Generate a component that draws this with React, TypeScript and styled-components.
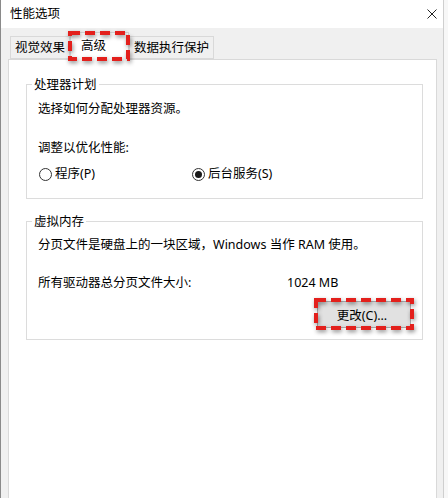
import React from "react";
import styled, { createGlobalStyle } from "styled-components";

const GlobalStyle = createGlobalStyle`
    html, body {
        margin: 0;
        padding: 0;
        background: #f7f7f7;
        overflow: hidden;
    }
    body {
        font-family: "Noto Sans", "Noto Sans CJK SC", sans-serif;
        font-size: 12.5px;
        color: #000;
    }
`

const Window = styled.div`
    width: 442px;
    height: 520px;
    display: flex;
    flex-direction: column;
    border-left: 1px solid #8a8a8a;
    border-right: 1px solid #cfcfcf;
    background: #f0f0f0;
`
const TitleBar = styled.div`
    height: 28px;
    display: flex;
    align-items: center;
    justify-content: space-between;
    padding: 0 6px 0 9px;
    background: #fff;
    line-height: 16px;
`
const Body = styled.div`
    flex: 1;
    display: flex;
    flex-direction: column;
    padding: 4px 6px 0 7px;
`
const TabRow = styled.div`
    display: flex;
    align-items: flex-end;
    padding-left: 2px;
    position: relative;
    z-index: 1;
`
const Tab = styled.div<{ $active?: boolean }>`
    position: relative;
    box-sizing: border-box;
    height: ${p => (p.$active ? "28px" : "23px")};
    margin-bottom: ${p => (p.$active ? "-1px" : "0")};
    padding: ${p => (p.$active ? "0 22px 2px 10px" : "0 4px")};
    display: flex;
    align-items: center;
    background: ${p => (p.$active ? "#fff" : "#f0f0f0")};
    border: 1px solid #d9d9d9;
    border-bottom: ${p => (p.$active ? "none" : "1px solid #d9d9d9")};
    border-left: ${p => (p.$active ? "1px solid #d9d9d9" : "1px solid #d9d9d9")};
    line-height: 16px;
    white-space: nowrap;
    & + & {
        border-left: ${p => (p.$active ? "1px solid #d9d9d9" : "none")};
    }
`
const Annotation = styled.svg<{ $x: number; $y: number }>`
    position: absolute;
    left: ${p => p.$x}px;
    top: ${p => p.$y}px;
    overflow: visible;
    pointer-events: none;
    filter: drop-shadow(1px 2px 2px rgba(0, 0, 0, 0.45));
    z-index: 2;
`
const Panel = styled.div`
    flex: 1;
    display: flex;
    flex-direction: column;
    gap: 15px;
    background: #fff;
    border: 1px solid #d9d9d9;
    padding: 17px 13px 0 17px;
`
const Group = styled.fieldset`
    margin: 0;
    min-width: 0;
    border: 1px solid #dcdcdc;
    padding: 0 11px;
    display: flex;
    flex-direction: column;
`
const Legend = styled.legend`
    margin-left: -6px;
    padding: 0 2px;
    line-height: 15px;
`
const Line = styled.div<{ $gap?: number }>`
    line-height: 16px;
    margin-top: ${p => p.$gap ?? 0}px;
    white-space: nowrap;
`
const Columns = styled.div<{ $first: number; $gap?: number }>`
    display: grid;
    grid-template-columns: ${p => p.$first}px auto;
    line-height: 16px;
    margin-top: ${p => p.$gap ?? 0}px;
`
const RadioLabel = styled.label`
    display: flex;
    align-items: center;
    gap: 3px;
`
const RadioDot = styled.span<{ $checked?: boolean }>`
    box-sizing: border-box;
    width: 13px;
    height: 13px;
    margin-left: 1px;
    border-radius: 50%;
    border: 1px solid #333;
    background: #fff;
    display: flex;
    align-items: center;
    justify-content: center;
    &::after {
        content: "";
        width: 7px;
        height: 7px;
        border-radius: 50%;
        background: ${p => (p.$checked ? "#1a1a1a" : "transparent")};
    }
`
const ButtonRow = styled.div`
    display: flex;
    justify-content: flex-end;
    margin-top: 10px;
    padding-bottom: 11px;
`
const ButtonWrap = styled.div`
    position: relative;
`
const Button = styled.button`
    box-sizing: border-box;
    width: 94px;
    height: 27px;
    background: #e1e1e1;
    border: 1px solid #adadad;
    font: inherit;
    color: #000;
    padding: 0;
    padding-right: 4px;
`

const RedBox = ({ x, y, w, h }: { x: number; y: number; w: number; h: number }) => (
    <Annotation $x={x} $y={y} width={w} height={h}>
        <rect x={2} y={2} width={w - 4} height={h - 4} fill="none" stroke="#e3201c" strokeWidth={4} strokeDasharray="10 5" />
    </Annotation>
)

const CloseIcon = () => (
    <svg width="10" height="10" viewBox="0 0 10 10">
        <path d="M0.5 0.5 L9.5 9.5 M9.5 0.5 L0.5 9.5" stroke="#222" strokeWidth="1" />
    </svg>
)

const App = () => {
    return (
        <>
            <GlobalStyle />
            <Window>
                <TitleBar>
                    <span>性能选项</span>
                    <CloseIcon />
                </TitleBar>
                <Body>
                    <TabRow>
                        <Tab>视觉效果</Tab>
                        <Tab $active>
                            高级
                            <RedBox x={-3} y={-2} w={62} h={30} />
                        </Tab>
                        <Tab>数据执行保护</Tab>
                    </TabRow>
                    <Panel>
                        <Group>
                            <Legend>处理器计划</Legend>
                            <Line $gap={9}>选择如何分配处理器资源。</Line>
                            <Line $gap={23}>调整以优化性能:</Line>
                            <Columns $first={153} $gap={10} style={{ paddingBottom: 16 }}>
                                <RadioLabel>
                                    <RadioDot />
                                    程序(P)
                                </RadioLabel>
                                <RadioLabel>
                                    <RadioDot $checked />
                                    后台服务(S)
                                </RadioLabel>
                            </Columns>
                        </Group>
                        <Group>
                            <Legend>虚拟内存</Legend>
                            <Line $gap={8}>分页文件是硬盘上的一块区域，Windows 当作 RAM 使用。</Line>
                            <Columns $first={249} $gap={22}>
                                <span>所有驱动器总分页文件大小:</span>
                                <span>1024 MB</span>
                            </Columns>
                            <ButtonRow>
                                <ButtonWrap>
                                    <Button>更改(C)...</Button>
                                    <RedBox x={-3} y={-3} w={100} h={32} />
                                </ButtonWrap>
                            </ButtonRow>
                        </Group>
                    </Panel>
                </Body>
            </Window>
        </>
    )
}

export default App;
